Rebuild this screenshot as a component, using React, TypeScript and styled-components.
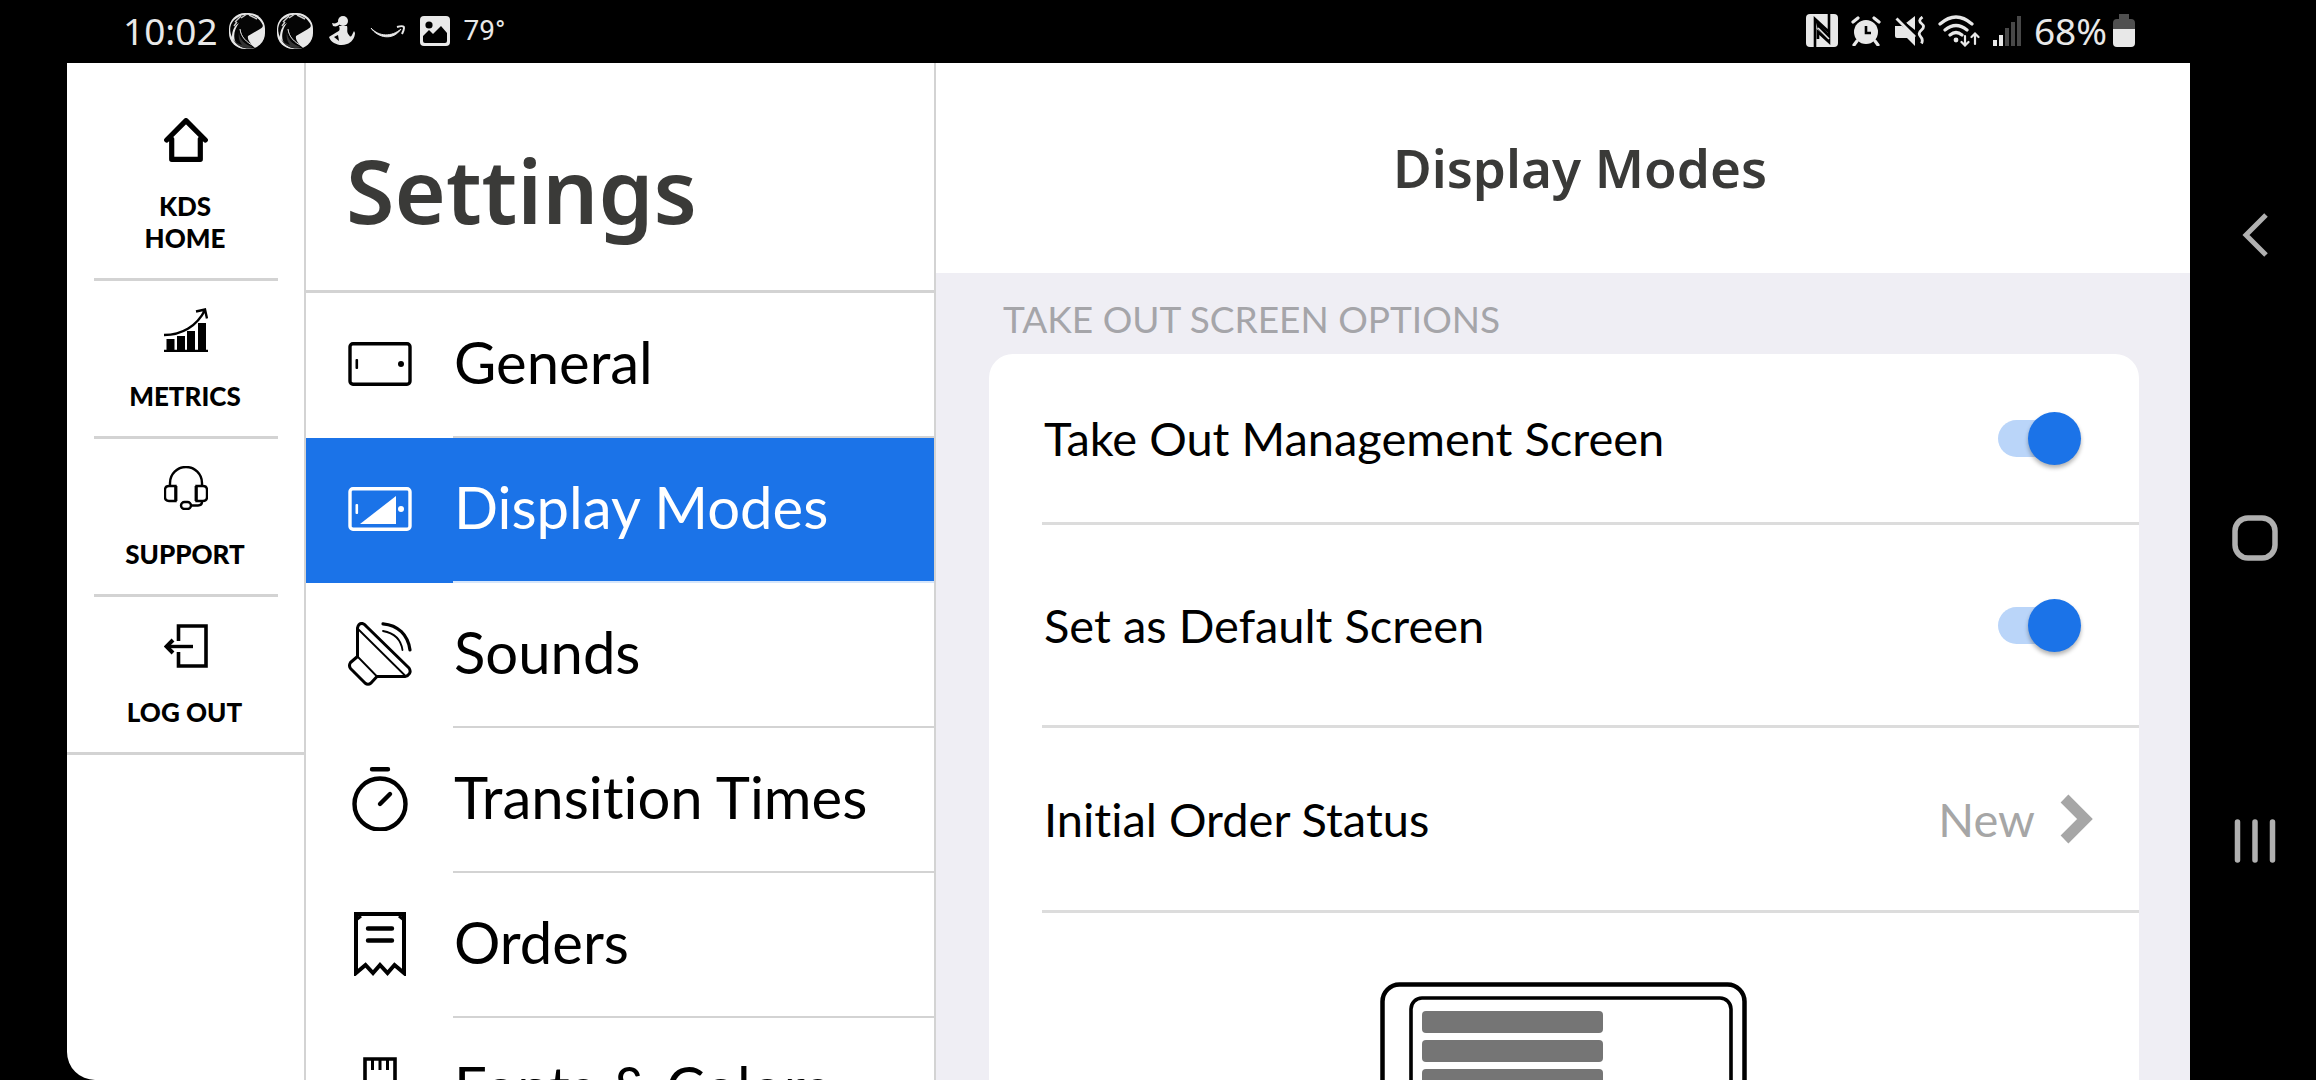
import React, { useState } from 'react';
import styled, { createGlobalStyle, css } from 'styled-components';

const LINE = '#d3d3d3';
const BLUE = '#1b73e8';
const SYSTEM_FONT = '"Noto Sans", "Open Sans", sans-serif';

const GlobalStyle = createGlobalStyle`
  *, *::before, *::after { box-sizing: border-box; }
  body {
    margin: 0;
    background: #000;
    color: #000;
    font-family: Lato, "Liberation Sans", sans-serif;
    font-variant-ligatures: none;
  }
  h1, h2, h3, p, ul { margin: 0; padding: 0; }
  ul { list-style: none; }
  button { border: 0; padding: 0; background: none; font: inherit; font-variant-ligatures: none; color: inherit; cursor: pointer; }
  a { color: inherit; text-decoration: none; }
  svg { display: block; flex: none; }
`;

const Device = styled.div`
  display: flex;
  height: 100vh;
  overflow: hidden;
  background: #000;
`;

const DeviceMain = styled.div`
  flex: 1;
  min-width: 0;
  display: flex;
  flex-direction: column;
`;

const StatusBar = styled.header`
  flex: 0 0 63px;
  display: flex;
  align-items: center;
  justify-content: space-between;
  padding: 0 55px 2px 123px;
  color: #e8e8e8;
  font-family: ${SYSTEM_FONT};
`;

const StatusGroup = styled.div<{ $gap: number }>`
  display: flex;
  align-items: center;
  gap: ${(p) => p.$gap}px;
`;

const StatusText = styled.span<{ $small?: boolean }>`
  font-size: ${(p) => (p.$small ? 28 : 37)}px;
  font-family: ${(p) => (p.$small ? 'Roboto, sans-serif' : 'inherit')};
  line-height: 40px;
`;

const Screen = styled.div`
  flex: 1;
  min-height: 0;
  display: flex;
  margin-left: 67px;
  background: #fff;
  border-bottom-left-radius: 28px;
  overflow: hidden;
`;

const SystemNav = styled.nav`
  flex: 0 0 126px;
  display: flex;
  flex-direction: column;
  align-items: center;
  justify-content: center;
  gap: 239px;
  padding: 0 0 4px 4px;
`;

const SystemButton = styled.button`
  display: grid;
  place-items: center;
  width: 64px;
  height: 64px;
  color: #b0b0b0;
`;

const Rail = styled.nav`
  flex: 0 0 239px;
  padding-top: 28px;
  border-right: 2px solid ${LINE};
`;

const RailItem = styled.li`
  padding: 0 26px 0 27px;

  &:last-child {
    padding: 0;
    border-bottom: 3px solid ${LINE};
  }
`;

const RailLink = styled.a`
  display: flex;
  flex-direction: column;
  align-items: center;
  gap: 28px;
  padding: 27px 0 24px;
  font-size: 26px;
  font-weight: 900;
  line-height: 32px;
  text-align: center;

  ${RailItem}:not(:last-child) & {
    border-bottom: 3px solid ${LINE};
  }
`;

const RailLabel = styled.span`
  max-width: 130px;
  padding-right: 2px;
`;

const Menu = styled.section`
  flex: 0 0 630px;
  border-right: 2px solid ${LINE};
`;

const MenuTitle = styled.h1`
  padding: 67px 40px 40px;
  border-bottom: 3px solid ${LINE};
  color: #3a3a38;
  font-family: ${SYSTEM_FONT};
  font-size: 88px;
  font-weight: 600;
  line-height: 120px;
`;

const MenuButton = styled.button<{ $active: boolean }>`
  display: flex;
  width: 100%;
  height: 145px;
  gap: 41px;
  padding-left: 42px;
  text-align: left;
  ${(p) =>
    p.$active &&
    css`
      background: ${BLUE};
      color: #fff;
    `}
`;

const MenuIcon = styled.span`
  display: grid;
  place-items: center;
  width: 64px;
  height: 142px;
`;

const MenuLabel = styled.span<{ $active: boolean }>`
  flex: 1;
  height: 145px;
  padding: 33px 0 0 1px;
  border-bottom: 2px solid ${(p) => (p.$active ? '#d6e6fb' : LINE)};
  font-size: 58px;
  line-height: 72px;
  white-space: nowrap;
`;

const Detail = styled.main`
  flex: 1;
  min-width: 0;
  background: #efeef4;
`;

const DetailHeader = styled.div`
  display: grid;
  place-items: center;
  height: 210px;
  padding-left: 34px;
  background: #fff;
`;

const DetailTitle = styled.h2`
  color: #3a3a38;
  font-family: ${SYSTEM_FONT};
  font-size: 53px;
  font-weight: 600;
  line-height: 72px;
`;

const DetailBody = styled.div`
  padding: 22px 51px 0 53px;
`;

const SectionTitle = styled.h3`
  padding: 0 14px 11px;
  color: #a5a5a9;
  font-size: 37px;
  font-weight: 400;
  line-height: 48px;
`;

const Card = styled.div`
  padding-left: 53px;
  border-radius: 24px;
  background: #fff;
`;

const rowStyles = css<{ $height: number }>`
  display: flex;
  align-items: center;
  width: 100%;
  height: ${(p) => p.$height}px;
  border-bottom: 3px solid #dcdcdc;
  font-size: 47px;
  line-height: 56px;
  text-align: left;
`;

const ToggleRow = styled.label<{ $height: number }>`
  ${rowStyles}
  padding-right: 58px;
`;

const LinkRow = styled.button<{ $height: number }>`
  ${rowStyles}
  padding-right: 46px;
`;

const RowText = styled.span`
  flex: 1;
  padding-left: 2px;
`;

const RowValue = styled.span`
  margin-right: 25px;
  color: #a6a6a6;
`;

const Switch = styled.input`
  appearance: none;
  position: relative;
  width: 83px;
  height: 53px;
  margin: 0;
  cursor: pointer;

  &::before {
    content: '';
    position: absolute;
    inset: 8px 4px 8px 0;
    border-radius: 19px;
    background: #c8c8c8;
  }
  &::after {
    content: '';
    position: absolute;
    left: 0;
    top: 0;
    width: 53px;
    height: 53px;
    border-radius: 50%;
    background: #f4f4f4;
    box-shadow: 0 3px 4px rgba(0, 0, 0, 0.3);
  }
  &:checked::before { background: #bad5f9; }
  &:checked::after { left: 30px; background: ${BLUE}; }
`;

const Preview = styled.div`
  display: flex;
  justify-content: center;
  padding: 69px 53px 60px 0;
`;

/* ---------- status bar icons ---------- */

const GlobeIcon = () => (
  <svg width="38" height="38" viewBox="0 0 38 38">
    <rect x="1" y="1" width="36" height="36" rx="16" fill="#e8e8e8" />
    <path d="M9 6C17 0 29 3 33 10c3 4 2 5-1 7l-12 7c-1 4 3 8 7 12-10 2-17-1-20-7C5 23 7 16 11 11c-4 2-7 7-7 14C0 17 3 9 9 6z" fill="#050505" />
    <path d="M11 20c0 7 6 13 14 15-8 3-17-1-20-8 2 3 5 5 9 6-3-4-4-8-3-13z" fill="#333" />
    <path d="M7 10l6-6M13 6l6-4M21 3l8 4M6 14l3-4" stroke="#ccc" strokeWidth="1.400" />
    <path d="M12 17c1 8 6 13 14 17" stroke="#eee" strokeWidth="1" fill="none" />
  </svg>
);

const FigureIcon = () => (
  <svg width="36" height="32" viewBox="0 0 36 32" fill="#e8e8e8">
    <circle cx="19" cy="6" r="5" />
    <path d="M16 9c-2 2-4 3-7 2l-1-3c3 1 5 0 7-2z" />
    <path d="M15 11h8c1 3-1 6 2 9 1 2 2 2 3 0l2-4 1 2c0 5-4 10-8 11-5 2-9 1-13-1-2-1-4-3-5-6 3-2 6-4 8-5 3-1 3-3 2-6z" />
    <path d="M10 22l4-2 1 6z" fill="#000" />
  </svg>
);

const SmileIcon = () => (
  <svg width="36" height="16" viewBox="0 0 36 16" fill="none" stroke="#e8e8e8">
    <path d="M1 5c8 9 21 9 30 1-8 12-23 9-30-1z" fill="#e8e8e8" strokeWidth="1" />
    <path d="M27 4c7-2 9-1 5 7" strokeWidth="2" />
  </svg>
);

const PictureIcon = () => (
  <svg width="38" height="30" viewBox="0 0 38 30">
    <rect x="4" y="0" width="30" height="30" rx="4" fill="#e8e8e8" />
    <circle cx="13" cy="9" r="3.600" fill="#000" />
    <path d="M7 25v-5l6-6 4 4 8-8 6 7v8q0 2-2 2H9q-2 0-2-2z" fill="#000" />
  </svg>
);

const NfcIcon = () => (
  <svg width="32" height="33" viewBox="0 0 32 33">
    <rect width="32" height="33" rx="4" fill="#e8e8e8" />
    <path d="M9 33V5l14 13V9M23 0v28L12 18v7" fill="none" stroke="#000" strokeWidth="2.600" />
    <path d="M9 5l14 15v8L12 16z" fill="#000" />
    <path d="M12 14l11 11" stroke="#e8e8e8" strokeWidth="1.600" />
  </svg>
);

const AlarmIcon = () => (
  <svg width="30" height="30" viewBox="0 0 30 30" stroke="#e8e8e8" strokeLinecap="round">
    <circle cx="15" cy="16" r="12" fill="#e8e8e8" stroke="none" />
    <path d="M2 6l5-4M28 6l-5-4M6 25l-3 4M24 25l3 4" strokeWidth="3.200" />
    <path d="M15 10v7h5" stroke="#000" strokeWidth="2.600" fill="none" strokeLinecap="butt" />
  </svg>
);

const MuteIcon = () => (
  <svg width="31" height="30" viewBox="0 0 31 30" fill="#e8e8e8">
    <path d="M12 7l9-7v14z" />
    <path d="M1 10h7L21 19v11l-8-8H3q-2 0-2-2z" />
    <path d="M2.500 2.500L21 21" stroke="#e8e8e8" strokeWidth="2.800" />
    <path d="M6.500 2.500L22 18" stroke="#000" strokeWidth="1.800" />
    <path d="M28.500 1q-5 3.500-1 6.500t0 6.500-1 6.500 1 7" stroke="#e8e8e8" strokeWidth="2.800" fill="none" />
  </svg>
);

const WifiIcon = () => (
  <svg width="42" height="32" viewBox="0 0 42 32" fill="none" stroke="#e8e8e8" strokeLinecap="round">
    <path d="M2 9q16-14 32 0M7 15q11-9 22 0M12 20q6-5 12 0" strokeWidth="3.200" />
    <circle cx="18" cy="25" r="2.400" fill="#e8e8e8" stroke="none" />
    <path d="M27 21v9M23.500 27l3.500 3.500 3.500-3.500M37 29v-10M33.500 22l3.500-3.500 3.500 3.500" strokeWidth="2.200" />
  </svg>
);

const SignalIcon = () => (
  <svg width="28" height="30" viewBox="0 0 28 30">
    <path d="M0 24h4v6H0zM6 19h4v11H6z" fill="#e8e8e8" />
    <path d="M12 12h4v18h-4zM18 6h4v24h-4zM24 0h4v30h-4z" fill="#484848" />
  </svg>
);

const BatteryIcon = () => (
  <svg width="22" height="33" viewBox="0 0 22 33">
    <path d="M6 0h10v5h2q4 0 4 4v7H0V9q0-4 4-4h2z" fill="#505050" />
    <path d="M0 15h22v14q0 4-4 4H4q-4 0-4-4z" fill="#e8e8e8" />
  </svg>
);

/* ---------- rail icons ---------- */

const HomeIcon = () => (
  <svg width="44" height="44" viewBox="0 0 44 44" fill="none" stroke="#000" strokeWidth="5.200" strokeLinecap="round" strokeLinejoin="round">
    <path d="M2.700 22L22 2.700 41.300 22M7.700 21v20.300h28.600V21" />
  </svg>
);

const MetricsIcon = () => (
  <svg width="44" height="44" viewBox="0 0 44 44">
    <path d="M2.500 31h8v12h-8zM13 28h8v15h-8zM23 23h8v20h-8zM34 15h8v28h-8z" />
    <path d="M0 43h44" stroke="#000" strokeWidth="2.400" />
    <path d="M0 27C18 27 33 18 41 2M32 3.500L41 1.500l2 9" stroke="#000" strokeWidth="2.400" fill="none" />
  </svg>
);

const SupportIcon = () => (
  <svg width="44" height="44" viewBox="0 0 44 44" fill="none" stroke="#000" strokeWidth="2.400">
    <path d="M6 20v-3a16 16 0 0 1 32 0v3" />
    <path d="M11.500 20v15H5q-4 0-4-4v-7q0-4 4-4zM32.500 20v15H39q4 0 4-4v-7q0-4-4-4z" />
    <path d="M12 20v15M32 20v15" strokeWidth="2.800" />
    <rect x="17" y="36" width="10" height="7" rx="3.500" />
    <path d="M27 39.500h7q4 0 4-4" />
  </svg>
);

const LogoutIcon = () => (
  <svg width="44" height="44" viewBox="0 0 44 44" fill="none" stroke="#000" strokeWidth="3.600">
    <path d="M14.500 17V2h27.500v40H14.500V28" />
    <path d="M29 22.500H4" strokeWidth="3.400" />
    <path d="M9 16l-6.500 6.500L9 29" strokeWidth="4" />
  </svg>
);

/* ---------- menu icons ---------- */

const TabletIcon = ({ filled = false }: { filled?: boolean }) => (
  <svg width="64" height="44" viewBox="0 0 64 44">
    <rect x="2" y="1.800" width="60" height="40.400" rx="3" fill="none" stroke="currentColor" strokeWidth="3.400" />
    <rect x="7.500" y="17" width="2.600" height="10" rx="1" fill="currentColor" />
    <circle cx="53" cy="22" r="3" fill="currentColor" />
    {filled && <path d="M12 37L48 9v28z" fill="currentColor" />}
  </svg>
);

const SpeakerIcon = () => (
  <svg width="64" height="64" viewBox="0 0 64 64" fill="none" stroke="#000" strokeLinejoin="round" strokeLinecap="round">
    <path d="M9.500 6q1-5 5-4.500 2 .5 4 3L61 46q2 3 .5 5.500T57 54.500H29l-6 6.500q-3 2.500-6 0L2.500 46.500q-2-3 0-6l7-6z" strokeWidth="3" />
    <path d="M10 7l46.500 46M9.500 34.500L29 54.500" strokeWidth="1.800" />
    <path d="M35 1.800C50 3 60 13 62 28" strokeWidth="3.200" />
    <path d="M35 9C46 11 53 18 54.500 28" strokeWidth="1.800" />
  </svg>
);

const TimerIcon = () => (
  <svg width="64" height="64" viewBox="0 0 64 64" fill="none" stroke="#000" strokeLinecap="round">
    <circle cx="32" cy="37" r="25.500" strokeWidth="4.400" />
    <path d="M24 2.300h16M32 37l10-10" strokeWidth="4.400" />
  </svg>
);

const ReceiptIcon = () => (
  <svg width="64" height="64" viewBox="0 0 64 64" fill="none" stroke="#000">
    <path d="M8 61V2h48v59l-9.500-8-7 8-7.500-8-7 8-7.500-8z" strokeWidth="4" />
    <path d="M8 8l5-4M56 8l-5-4" strokeWidth="3" />
    <path d="M20 16.500h24M20 28.500h24" strokeWidth="4.400" strokeLinecap="round" />
  </svg>
);

const SwatchIcon = () => (
  <svg width="64" height="64" viewBox="0 0 64 64" fill="none" stroke="#000">
    <path d="M17 62V2h30v60z" strokeWidth="3.600" />
    <path d="M24.500 2v11M32 2v11M39.500 2v11" strokeWidth="3" />
  </svg>
);

/* ---------- app ---------- */

const railItems = [
  { label: 'KDS HOME', Icon: HomeIcon },
  { label: 'METRICS', Icon: MetricsIcon },
  { label: 'SUPPORT', Icon: SupportIcon },
  { label: 'LOG OUT', Icon: LogoutIcon },
];

const menuItems: { label: string; icon: React.ReactNode }[] = [
  { label: 'General', icon: <TabletIcon /> },
  { label: 'Display Modes', icon: <TabletIcon filled /> },
  { label: 'Sounds', icon: <SpeakerIcon /> },
  { label: 'Transition Times', icon: <TimerIcon /> },
  { label: 'Orders', icon: <ReceiptIcon /> },
  { label: 'Fonts & Colors', icon: <SwatchIcon /> },
];

const LayoutPreview = () => (
  <svg width="368" height="250" viewBox="0 0 368 250" aria-hidden="true">
    <rect x="2.500" y="2.500" width="362" height="245" rx="17" fill="none" stroke="#000" strokeWidth="4.500" />
    <rect x="31" y="16" width="320" height="218" rx="11" fill="none" stroke="#000" strokeWidth="3.600" />
    {[0, 1, 2, 3, 4, 5, 6].map((i) => (
      <rect key={i} x="42" y={29 + i * 29} width="181" height="22" rx="4" fill="#757575" />
    ))}
  </svg>
);

export default function App() {
  const [active, setActive] = useState('Display Modes');
  const [management, setManagement] = useState(true);
  const [defaultScreen, setDefaultScreen] = useState(true);

  return (
    <Device>
      <GlobalStyle />
      <DeviceMain>
        <StatusBar>
          <StatusGroup $gap={10}>
            <StatusText>10:02</StatusText>
            <GlobeIcon />
            <GlobeIcon />
            <FigureIcon />
            <SmileIcon />
            <PictureIcon />
            <StatusText $small>79°</StatusText>
          </StatusGroup>
          <StatusGroup $gap={13}>
            <NfcIcon />
            <AlarmIcon />
            <MuteIcon />
            <WifiIcon />
            <SignalIcon />
            <StatusGroup $gap={6}>
              <StatusText>68%</StatusText>
              <BatteryIcon />
            </StatusGroup>
          </StatusGroup>
        </StatusBar>

        <Screen>
          <Rail>
            <ul>
              {railItems.map(({ label, Icon }) => (
                <RailItem key={label}>
                  <RailLink href="#">
                    <Icon />
                    <RailLabel>{label}</RailLabel>
                  </RailLink>
                </RailItem>
              ))}
            </ul>
          </Rail>

          <Menu>
            <MenuTitle>Settings</MenuTitle>
            <ul>
              {menuItems.map(({ label, icon }) => (
                <li key={label}>
                  <MenuButton type="button" $active={label === active} onClick={() => setActive(label)}>
                    <MenuIcon>{icon}</MenuIcon>
                    <MenuLabel $active={label === active}>{label}</MenuLabel>
                  </MenuButton>
                </li>
              ))}
            </ul>
          </Menu>

          <Detail>
            <DetailHeader>
              <DetailTitle>Display Modes</DetailTitle>
            </DetailHeader>
            <DetailBody>
              <SectionTitle>TAKE OUT SCREEN OPTIONS</SectionTitle>
              <Card>
                <ToggleRow $height={171}>
                  <RowText>Take Out Management Screen</RowText>
                  <Switch type="checkbox" checked={management} onChange={(e) => setManagement(e.target.checked)} />
                </ToggleRow>
                <ToggleRow $height={203}>
                  <RowText>Set as Default Screen</RowText>
                  <Switch type="checkbox" checked={defaultScreen} onChange={(e) => setDefaultScreen(e.target.checked)} />
                </ToggleRow>
                <LinkRow type="button" $height={185}>
                  <RowText>Initial Order Status</RowText>
                  <RowValue>New</RowValue>
                  <svg width="33" height="50" viewBox="0 0 33 50" fill="none" stroke="#a6a6a6" strokeWidth="11">
                    <path d="M4.500 4.500L25 25 4.500 45.500" />
                  </svg>
                </LinkRow>
                <Preview>
                  <LayoutPreview />
                </Preview>
              </Card>
            </DetailBody>
          </Detail>
        </Screen>
      </DeviceMain>

      <SystemNav>
        <SystemButton type="button" aria-label="Back">
          <svg width="28" height="44" viewBox="0 0 28 44" fill="none" stroke="currentColor" strokeWidth="5">
            <path d="M25 2L5 22l20 20" />
          </svg>
        </SystemButton>
        <SystemButton type="button" aria-label="Home">
          <svg width="46" height="46" viewBox="0 0 46 46" fill="none" stroke="currentColor" strokeWidth="5.500">
            <rect x="3" y="3" width="40" height="40" rx="13" />
          </svg>
        </SystemButton>
        <SystemButton type="button" aria-label="Recent apps">
          <svg width="42" height="44" viewBox="0 0 42 44" stroke="currentColor" strokeWidth="5.500" strokeLinecap="round">
            <path d="M3.500 3v38M21 3v38M38.500 3v38" />
          </svg>
        </SystemButton>
      </SystemNav>
    </Device>
  );
}
